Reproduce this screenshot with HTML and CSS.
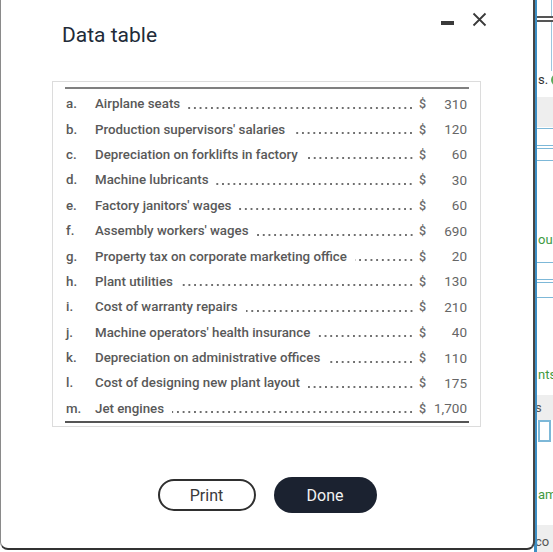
FILE: index.html
```html
<!DOCTYPE html>
<html>
<head>
<meta charset="utf-8">
<link rel="stylesheet" href="styles.css">
</head>
<body>
<div class="page">
  <div class="strip">
    <div class="s-top"></div>
    <div class="s-dbl"></div>
    <div class="s-gap1"></div>
    <div class="s-text dark">s. <span class="ring"></span></div>
    <div class="s-band"></div>
    <div class="s-box s-box1"></div>
    <div class="s-box s-box2"></div>
    <div class="s-gap2"></div>
    <div class="s-text green">our</div>
    <div class="s-gap3"></div>
    <div class="s-box s-box1 s-box1b"></div>
    <div class="s-box s-box2 s-box2b"></div>
    <div class="s-gap4"></div>
    <div class="s-text green">nts</div>
    <div class="s-band s-band2"><span>s</span></div>
    <div class="s-input"></div>
    <div class="s-gap5"></div>
    <div class="s-text green">am</div>
    <div class="s-gap6"></div>
    <div class="s-band s-band3"><span>co</span></div>
  </div>
</div>

<div class="dialog">
  <div class="dlg-head">
    <h1 class="dlg-title">Data table</h1>
    <div class="dlg-tools">
      <span class="tool-min"></span>
      <svg class="tool-close" width="15" height="15" viewBox="0 0 15 15"><path d="M1.5 1.5L13.5 13.5M13.5 1.5L1.5 13.5" stroke="#3a3a3a" stroke-width="1.8" fill="none"/></svg>
    </div>
  </div>

  <div class="table-box">
    <div class="table">
      <div class="row"><span class="ltr">a.</span><span class="desc">Airplane seats</span><span class="lead"></span><span class="cur">$</span><span class="amt">310</span></div>
      <div class="row"><span class="ltr">b.</span><span class="desc">Production supervisors' salaries</span><span class="lead"></span><span class="cur">$</span><span class="amt">120</span></div>
      <div class="row"><span class="ltr">c.</span><span class="desc">Depreciation on forklifts in factory</span><span class="lead"></span><span class="cur">$</span><span class="amt">60</span></div>
      <div class="row"><span class="ltr">d.</span><span class="desc">Machine lubricants</span><span class="lead"></span><span class="cur">$</span><span class="amt">30</span></div>
      <div class="row"><span class="ltr">e.</span><span class="desc">Factory janitors' wages</span><span class="lead"></span><span class="cur">$</span><span class="amt">60</span></div>
      <div class="row"><span class="ltr">f.</span><span class="desc">Assembly workers' wages</span><span class="lead"></span><span class="cur">$</span><span class="amt">690</span></div>
      <div class="row"><span class="ltr">g.</span><span class="desc">Property tax on corporate marketing office</span><span class="lead"></span><span class="cur">$</span><span class="amt">20</span></div>
      <div class="row"><span class="ltr">h.</span><span class="desc">Plant utilities</span><span class="lead"></span><span class="cur">$</span><span class="amt">130</span></div>
      <div class="row"><span class="ltr">i.</span><span class="desc">Cost of warranty repairs</span><span class="lead"></span><span class="cur">$</span><span class="amt">210</span></div>
      <div class="row"><span class="ltr">j.</span><span class="desc">Machine operators' health insurance</span><span class="lead"></span><span class="cur">$</span><span class="amt">40</span></div>
      <div class="row"><span class="ltr">k.</span><span class="desc">Depreciation on administrative offices</span><span class="lead"></span><span class="cur">$</span><span class="amt">110</span></div>
      <div class="row"><span class="ltr">l.</span><span class="desc">Cost of designing new plant layout</span><span class="lead"></span><span class="cur">$</span><span class="amt">175</span></div>
      <div class="row"><span class="ltr">m.</span><span class="desc">Jet engines</span><span class="lead"></span><span class="cur">$</span><span class="amt">1,700</span></div>
    </div>
  </div>

  <div class="actions">
    <button class="btn btn-outline">Print</button>
    <button class="btn btn-dark">Done</button>
  </div>
</div>
</body>
</html>
```

FILE: styles.css
```css
* { box-sizing: border-box; }

html, body {
  margin: 0;
  padding: 0;
}

body {
  width: 553px;
  height: 552px;
  overflow: hidden;
  position: relative;
  background: #ffffff;
  font-family: Roboto, "Liberation Sans", Arial, sans-serif;
}

/* underlying page strip */
.page {
  height: 552px;
  padding-left: 534px;
}

.strip {
  height: 552px;
  border-left: 3px solid #3d8fc4;
  display: flex;
  flex-direction: column;
  overflow: hidden;
  background: #fff;
}

.strip > div { flex: none; }

.s-top { height: 16px; border-right: 1px solid #9cc6de; margin-right: 1px; }
.s-dbl {
  height: 6px;
  border-top: 2px solid #555;
  border-bottom: 2px solid #555;
}
.s-gap1 { height: 49px; border-right: 1px solid #9cc6de; margin-right: 1px; }

.s-text {
  height: 18px;
  font-size: 13px;
  line-height: 18px;
  white-space: nowrap;
  padding-left: 1px;
}
.dark { color: #333; }
.green { color: #3f9a3f; }

.ring {
  display: inline-block;
  width: 12px;
  height: 12px;
  border: 2px solid #5aaa5a;
  border-radius: 50%;
  vertical-align: -2px;
}

.s-band {
  height: 30px;
  background: #eeeeee;
  margin-top: 8px;
}

.s-box {
  border-top: 1px solid #7db8d8;
  border-bottom: 1px solid #7db8d8;
}
.s-box1 { height: 18px; margin-top: 1px; }
.s-box2 { height: 13px; margin-top: 2px; }
.s-box1b { margin-top: 0; }
.s-box2b { height: 16px; }

.s-gap2 { height: 70px; }
.s-gap3 { height: 13px; }
.s-gap4 { height: 68px; }

.s-band2, .s-band3 {
  color: #555;
  font-size: 13px;
  line-height: 26px;
}
.s-band2 { height: 25px; margin-top: 11px; }
.s-band2 span, .s-band3 span { margin-left: -2px; }

.s-input {
  height: 22px;
  margin-left: 1px;
  margin-right: 2px;
  border: 2px solid #7db8d8;
}

.s-gap5 { height: 44px; }
.s-gap6 { height: 21px; }
.s-band3 { height: 27px; margin-top: 0; line-height: 34px; }

/* dialog */
.dialog {
  position: absolute;
  left: 0;
  top: -10px;
  width: 535px;
  height: 560px;
  background: #fff;
  border-left: 1px solid #8a8a8a;
  border-right: 2px solid #444;
  border-bottom: 2px solid #333;
  border-radius: 0 0 8px 8px;
  display: flex;
  flex-direction: column;
}

.dlg-head {
  display: flex;
  justify-content: space-between;
  align-items: flex-start;
  padding: 0 46px 0 61px;
  height: 91px;
}

.dlg-title {
  margin: 30px 0 0 0;
  font-weight: 400;
  font-size: 21px;
  line-height: 30px;
  color: #222b38;
  letter-spacing: 0;
}

.dlg-tools {
  display: flex;
  align-items: flex-start;
  gap: 18px;
  margin-top: 22px;
}

.tool-min {
  display: block;
  width: 13px;
  height: 3.5px;
  background: #3a3a3a;
  margin-top: 9px;
}

.tool-close { display: block; }

.table-box {
  margin: 0 52px 0 51px;
  border: 1px solid #dcdcdc;
  padding: 5px 11px 4px 12px;
  height: 346px;
}

.table {
  border-top: 2px solid #808080;
  border-bottom: 2px solid #555;
  padding-top: 2px;
}

.row {
  display: flex;
  align-items: center;
  height: 25.4px;
  padding-right: 2px;
  font-size: 13.3px;
  font-weight: 500;
  color: #595959;
  white-space: nowrap;
}

.ltr {
  width: 30px;
  padding-left: 1px;
  flex: none;
}

.desc { flex: none; }

.lead {
  flex: 1;
  height: 4px;
  margin: 0 5px 0 8px;
  background-image: radial-gradient(circle, #6f6f6f 0 0.85px, transparent 1.35px);
  background-size: 5.7px 4px;
  background-position: right center;
  background-repeat: repeat-x;
  transform: translateY(4px);
}

.cur {
  width: 14px;
  flex: none;
  font-size: 12.5px;
  color: #6a6a6a;
}

.amt {
  width: 34px;
  text-align: right;
  flex: none;
  font-weight: 400;
  font-size: 13.5px;
  color: #666;
}

.actions {
  display: flex;
  justify-content: center;
  align-items: center;
  gap: 18px;
  margin-top: 50px;
}

.btn {
  font-family: Roboto, "Liberation Sans", Arial, sans-serif;
  font-size: 16px;
  border-radius: 18px;
  cursor: pointer;
}

.btn-outline {
  width: 98px;
  height: 32px;
  background: #fff;
  border: 2px solid #2f2f2f;
  color: #3a3a3a;
}

.btn-dark {
  width: 103px;
  height: 36px;
  background: #1b2230;
  border: none;
  color: #f2f2f2;
}
```
